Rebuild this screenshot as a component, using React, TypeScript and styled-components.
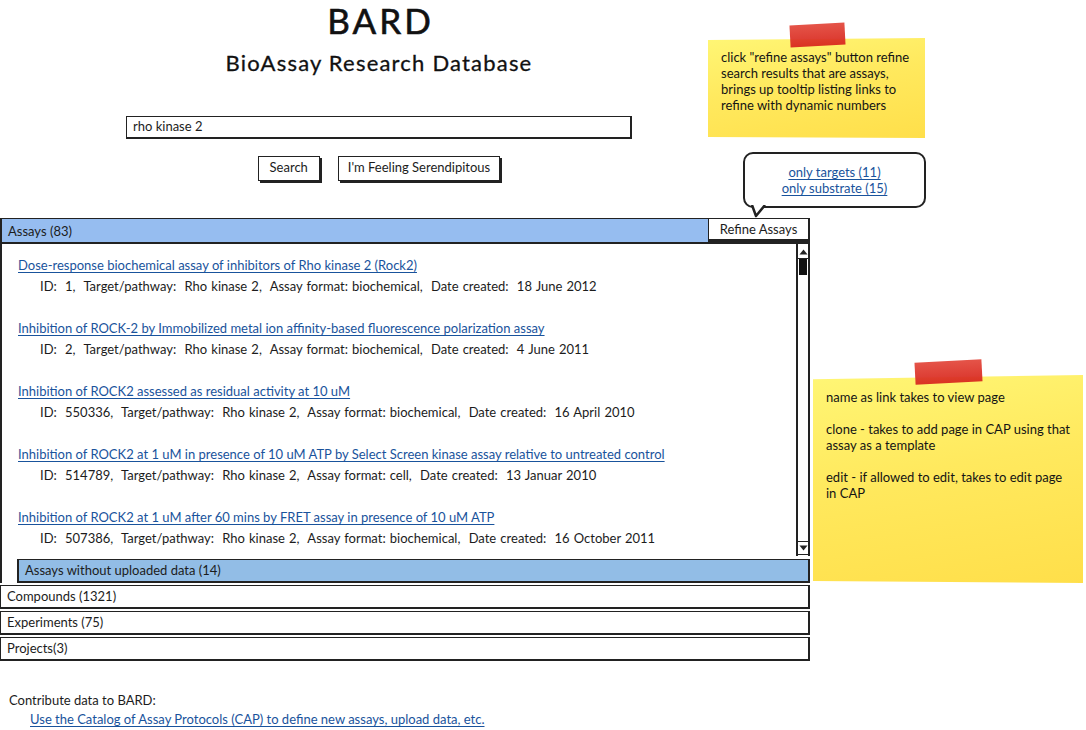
import styled, { createGlobalStyle } from "styled-components";

const GlobalStyle = createGlobalStyle`
  html, body {
    margin: 0;
    padding: 0;
    background: #ffffff;
  }
  body {
    font-family: Lato, "Liberation Sans", sans-serif;
    color: #1c1c1c;
  }
`;

const INK = "#222222";
const LINK = "#19539c";
const BLUE = "#96bdf0";

const assays = [
  {
    title: "Dose-response biochemical assay of inhibitors of Rho kinase 2 (Rock2)",
    id: "1",
    format: "biochemical",
    date: "18 June 2012",
  },
  {
    title: "Inhibition of ROCK-2 by Immobilized metal ion affinity-based fluorescence polarization assay",
    id: "2",
    format: "biochemical",
    date: "4 June 2011",
  },
  {
    title: "Inhibition of ROCK2 assessed as residual activity at 10 uM",
    id: "550336",
    format: "biochemical",
    date: "16 April 2010",
  },
  {
    title: "Inhibition of ROCK2 at 1 uM in presence of 10 uM ATP by Select Screen kinase assay relative to untreated control",
    id: "514789",
    format: "cell",
    date: "13 Januar 2010",
  },
  {
    title: "Inhibition of ROCK2 at 1 uM after 60 mins by FRET assay in presence of 10 uM ATP",
    id: "507386",
    format: "biochemical",
    date: "16 October 2011",
  },
];

export default function App() {
  return (
    <Styled.Page>
      <GlobalStyle />
      <Styled.Main>
        <Styled.Top>
          <Styled.Title>BARD</Styled.Title>
          <Styled.Subtitle>BioAssay Research Database</Styled.Subtitle>
          <Styled.SearchBox>rho kinase 2</Styled.SearchBox>
          <Styled.Buttons>
            <Styled.Button>Search</Styled.Button>
            <Styled.Button>I'm Feeling Serendipitous</Styled.Button>
          </Styled.Buttons>
        </Styled.Top>

        <Styled.Results>
          <Styled.Bar>
            <span>Assays (83)</span>
            <Styled.RefineButton>Refine Assays</Styled.RefineButton>
          </Styled.Bar>
          <Styled.AssayBody>
            <Styled.ListBox>
              <Styled.Entries>
                {assays.map((a) => (
                  <Styled.Entry key={a.id}>
                    <Styled.Link>{a.title}</Styled.Link>
                    <Styled.Details>
                      {`ID:  ${a.id},  Target/pathway:  Rho kinase 2,  Assay format: ${a.format},  Date created:  ${a.date}`}
                    </Styled.Details>
                  </Styled.Entry>
                ))}
              </Styled.Entries>
              <Styled.Scrollbar>
                <Styled.Arrow>
                  <svg width="9" height="6" viewBox="0 0 9 6">
                    <path d="M0.5 5.5 L4.5 0.5 L8.5 5.5 Z" fill={INK} />
                  </svg>
                </Styled.Arrow>
                <Styled.Thumb />
                <Styled.Track />
                <Styled.Arrow $bottom>
                  <svg width="9" height="6" viewBox="0 0 9 6">
                    <path d="M0.5 0.5 L4.5 5.5 L8.5 0.5 Z" fill={INK} />
                  </svg>
                </Styled.Arrow>
              </Styled.Scrollbar>
            </Styled.ListBox>
            <Styled.SubBar>Assays without uploaded data (14)</Styled.SubBar>
          </Styled.AssayBody>
          <Styled.Row>Compounds (1321)</Styled.Row>
          <Styled.Row>Experiments (75)</Styled.Row>
          <Styled.Row>Projects(3)</Styled.Row>
        </Styled.Results>

        <Styled.Contribute>
          <div>Contribute data to BARD:</div>
          <Styled.ContributeLink>
            Use the Catalog of Assay Protocols (CAP) to define new assays, upload data, etc.
          </Styled.ContributeLink>
        </Styled.Contribute>
      </Styled.Main>

      <Styled.Note $left={708} $top={38} $width={217} $height={100}>
        <Styled.Paper $padTop={11}>
          click "refine assays" button refine search results that are assays,
          brings up tooltip listing links to refine with dynamic numbers
        </Styled.Paper>
        <Styled.Tape $left={82} $width={55} />
      </Styled.Note>

      <Styled.Tooltip>
        <Styled.TooltipLink>only targets (11)</Styled.TooltipLink>
        <Styled.TooltipLink>only substrate (15)</Styled.TooltipLink>
        <Styled.Tail width="22" height="14" viewBox="0 0 22 14">
          <path d="M1 0 L5 11 L14 0" fill="#fff" stroke={INK} strokeWidth="2.5" strokeLinejoin="round" />
        </Styled.Tail>
      </Styled.Tooltip>

      <Styled.Note $left={813} $top={375} $width={270} $height={208}>
        <Styled.Paper $padTop={14}>
          <p>name as link takes to view page</p>
          <p>clone - takes to add page in CAP using that assay as a template</p>
          <p>edit - if allowed to edit, takes to edit page in CAP</p>
        </Styled.Paper>
        <Styled.Tape $left={102} $width={67} />
      </Styled.Note>
    </Styled.Page>
  );
}

const Styled = {
  Page: styled.div`
    position: relative;
    width: 1086px;
    height: 730px;
    overflow: hidden;
    font-size: 13px;
  `,
  Main: styled.div`
    display: flex;
    flex-direction: column;
    width: 810px;
  `,
  Top: styled.div`
    display: flex;
    flex-direction: column;
    align-items: center;
    width: 758px;
  `,
  Title: styled.div`
    margin-top: -1px;
    font-size: 35px;
    line-height: 42px;
    letter-spacing: 3px;
    padding-left: 3px;
    color: #111;
    -webkit-text-stroke: 0.6px #111;
  `,
  Subtitle: styled.div`
    margin-top: 11px;
    font-size: 22px;
    line-height: 22px;
    letter-spacing: 1.2px;
    color: #111;
    -webkit-text-stroke: 0.3px #111;
  `,
  SearchBox: styled.div`
    box-sizing: border-box;
    margin-top: 42px;
    width: 506px;
    height: 23px;
    padding: 0 6px;
    border: 1.5px solid ${INK};
    border-right-width: 2.5px;
    border-bottom-width: 2.5px;
    font-size: 13px;
    line-height: 19px;
  `,
  Buttons: styled.div`
    display: flex;
    gap: 18px;
    margin-top: 17px;
  `,
  Button: styled.div`
    box-sizing: border-box;
    height: 25px;
    padding: 0 9px;
    min-width: 62px;
    text-align: center;
    border: 1.5px solid ${INK};
    box-shadow: 2px 2px 0 ${INK};
    background: #fff;
    font-size: 13px;
    line-height: 21px;
  `,
  Results: styled.div`
    display: flex;
    flex-direction: column;
    margin-top: 37px;
  `,
  Bar: styled.div`
    box-sizing: border-box;
    display: flex;
    align-items: flex-start;
    justify-content: space-between;
    height: 26px;
    padding-left: 6px;
    background: ${BLUE};
    border: 2px solid ${INK};
    border-right: none;
    border-top-width: 1.5px;
    line-height: 20px;
    font-size: 13px;
    span {
      padding-top: 2px;
    }
  `,
  RefineButton: styled.div`
    box-sizing: border-box;
    margin-top: -1px;
    height: 24px;
    padding: 0 8px;
    background: #fff;
    border: 1.5px solid ${INK};
    border-right-width: 2.5px;
    border-bottom-width: 3px;
    line-height: 21px;
    width: 102px;
    text-align: center;
  `,
  AssayBody: styled.div`
    display: flex;
    flex-direction: column;
    border-left: 2px solid ${INK};
  `,
  ListBox: styled.div`
    display: flex;
    height: 312px;
  `,
  Entries: styled.div`
    flex: 1;
    display: flex;
    flex-direction: column;
    padding: 13px 0 0 16px;
  `,
  Entry: styled.div`
    display: flex;
    flex-direction: column;
    gap: 5px;
    margin-bottom: 26px;
  `,
  Link: styled.a`
    color: ${LINK};
    text-decoration: underline;
    text-underline-offset: 2px;
    line-height: 16px;
    white-space: nowrap;
    cursor: pointer;
  `,
  Details: styled.div`
    padding-left: 22px;
    line-height: 16px;
    white-space: pre;
    word-spacing: 0.8px;
    color: #1c1c1c;
  `,
  Scrollbar: styled.div`
    box-sizing: border-box;
    display: flex;
    flex-direction: column;
    width: 14px;
    border-left: 2px solid ${INK};
    border-right: 2px solid ${INK};
    padding: 2px 0 1px;
    background: #fff;
  `,
  Arrow: styled.div<{ $bottom?: boolean }>`
    display: flex;
    align-items: center;
    justify-content: center;
    height: 12px;
    border-top: ${(p) => (p.$bottom ? `1.5px solid ${INK}` : "none")};
    border-bottom: 1.5px solid ${INK};
  `,
  Thumb: styled.div`
    height: 16px;
    margin: 0 1px;
    background: #111;
  `,
  Track: styled.div`
    flex: 1;
  `,
  SubBar: styled.div`
    box-sizing: border-box;
    margin: 3px 0 0 15px;
    height: 24px;
    padding-left: 6px;
    background: #92bde6;
    border: 2px solid ${INK};
    border-top-width: 1.5px;
    line-height: 20px;
  `,
  Row: styled.div`
    box-sizing: border-box;
    margin-top: 2px;
    height: 24px;
    padding-left: 6px;
    background: #fff;
    border: 1.5px solid ${INK};
    border-bottom-width: 2.5px;
    border-right-width: 2px;
    line-height: 21px;
  `,
  Contribute: styled.div`
    display: flex;
    flex-direction: column;
    gap: 3px;
    margin-top: 31px;
    padding-left: 9px;
    line-height: 16px;
  `,
  ContributeLink: styled.a`
    padding-left: 21px;
    color: ${LINK};
    text-decoration: underline;
    text-underline-offset: 2px;
    cursor: pointer;
  `,
  Note: styled.div<{ $left: number; $top: number; $width: number; $height: number }>`
    position: absolute;
    left: ${(p) => p.$left}px;
    top: ${(p) => p.$top}px;
    width: ${(p) => p.$width}px;
    height: ${(p) => p.$height}px;
    display: flex;
  `,
  Paper: styled.div<{ $padTop: number }>`
    flex: 1;
    box-sizing: border-box;
    padding: ${(p) => p.$padTop}px 13px 11px;
    background: linear-gradient(170deg, #fff675 0%, #ffe95e 45%, #ffdf4a 100%);
    clip-path: polygon(0 2%, 100% 0, 100% 100%, 0 99%);
    font-size: 13px;
    line-height: 16px;
    color: #141414;
    p {
      margin: 0 0 16px;
    }
  `,
  Tape: styled.div<{ $left: number; $width: number }>`
    position: absolute;
    left: ${(p) => p.$left}px;
    top: -14px;
    width: ${(p) => p.$width}px;
    height: 22px;
    background: linear-gradient(180deg, #e34b3f 0%, #d8291f 100%);
    opacity: 0.95;
    transform: rotate(-3deg);
  `,
  Tooltip: styled.div`
    position: absolute;
    left: 743px;
    top: 152px;
    box-sizing: border-box;
    width: 183px;
    height: 56px;
    display: flex;
    flex-direction: column;
    align-items: center;
    justify-content: center;
    border: 2.5px solid ${INK};
    border-radius: 10px;
    background: #fff;
    line-height: 16px;
  `,
  TooltipLink: styled.a`
    color: ${LINK};
    text-decoration: underline;
    text-underline-offset: 2px;
    cursor: pointer;
  `,
  Tail: styled.svg`
    position: absolute;
    left: 6px;
    bottom: -13px;
  `,
};
